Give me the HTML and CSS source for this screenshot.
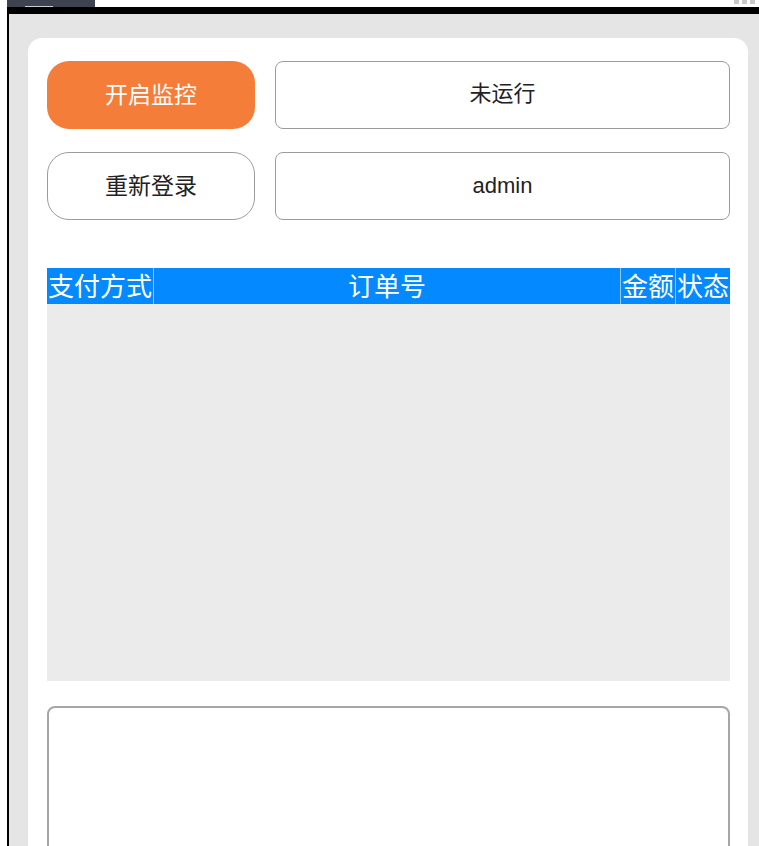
FILE: index.html
```html
<!DOCTYPE html>
<html lang="zh-CN">
<head>
<meta charset="utf-8">
<title>监控</title>
<link rel="stylesheet" href="styles.css">
</head>
<body>
<div class="topstrip">
  <div class="tab"><span class="tab-line"></span></div>
  <div class="dots"><span></span><span></span><span></span></div>
</div>
<div class="frame">
  <div class="card">
    <div class="row">
      <button class="btn btn-primary">开启监控</button>
      <div class="field">未运行</div>
    </div>
    <div class="row">
      <button class="btn btn-outline">重新登录</button>
      <div class="field field-latin">admin</div>
    </div>
    <div class="grid-box">
      <table class="orders">
        <thead>
          <tr>
            <th class="narrow">支付方式</th>
            <th class="wide">订单号</th>
            <th class="narrow">金额</th>
            <th class="narrow">状态</th>
          </tr>
        </thead>
      </table>
    </div>
    <textarea class="log"></textarea>
  </div>
</div>
</body>
</html>
```

FILE: styles.css
```css
* { box-sizing: border-box; }
html, body { margin: 0; padding: 0; height: 100%; overflow: hidden; }
body {
  font-family: "Liberation Sans", "Noto Sans CJK SC", sans-serif;
  background: #ffffff;
  color: #222;
}
.topstrip {
  height: 7px;
  display: flex;
  align-items: flex-start;
  justify-content: space-between;
  background: #fff;
}
.tab {
  margin-left: 7px;
  width: 88px;
  height: 7px;
  background: #3e4351;
  position: relative;
}
.tab-line {
  position: absolute;
  left: 18px;
  bottom: 0;
  width: 28px;
  height: 1px;
  background: #c9cbd0;
}
.dots { display: flex; gap: 3px; margin-right: 4px; }
.dots span { width: 5px; height: 4px; background: #c8c8c8; }
.frame {
  margin-left: 7px;
  border-left: 2px solid #000;
  border-top: 7px solid #000;
  background: #e5e5e5;
  padding: 24px 11px 0 19px;
  height: calc(100% - 7px);
}
.card {
  background: #fff;
  border-radius: 14px 14px 0 0;
  padding: 23px 18px 0 19px;
  height: 100%;
  overflow: hidden;
  display: flex;
  flex-direction: column;
}
.row {
  display: flex;
  gap: 20px;
  height: 68px;
  margin-bottom: 23px;
  flex-shrink: 0;
}
.btn {
  width: 208px;
  height: 68px;
  border-radius: 22px;
  font-family: inherit;
  font-size: 23px;
  line-height: 30px;
  padding: 0;
  cursor: pointer;
}
.btn-primary {
  background: #f47d3a;
  border: none;
  color: #fff;
}
.btn-outline {
  background: #fff;
  border: 1.5px solid #9c9c9c;
  color: #222;
}
.field {
  flex: 1;
  border: 1.5px solid #9c9c9c;
  border-radius: 8px;
  display: flex;
  align-items: center;
  justify-content: center;
  font-size: 22px;
  line-height: 28px;
  padding-bottom: 3px;
  color: #222;
}
.field-latin { padding-bottom: 0; }
.grid-box {
  margin-top: 25px;
  height: 413px;
  flex-shrink: 0;
  background: #ebebeb;
}
.orders {
  width: 100%;
  border-collapse: collapse;
  background: #0489ff;
}
.orders th {
  color: #fff;
  font-weight: normal;
  font-size: 26px;
  line-height: 34px;
  height: 36px;
  padding: 2px 1px 0;
  border-left: 1px solid #8fc8ff;
  border-right: 1px solid #8fc8ff;
  text-align: center;
  white-space: nowrap;
}
.orders th:first-child { border-left: none; }
.orders th:last-child { border-right: none; }
.orders th.wide { width: 100%; }
.log {
  display: block;
  flex-shrink: 0;
  margin-top: 25px;
  width: 100%;
  height: 200px;
  border: 2px solid #a6a6a6;
  border-radius: 8px;
  resize: none;
  background: #fff;
  outline: none;
}
```
